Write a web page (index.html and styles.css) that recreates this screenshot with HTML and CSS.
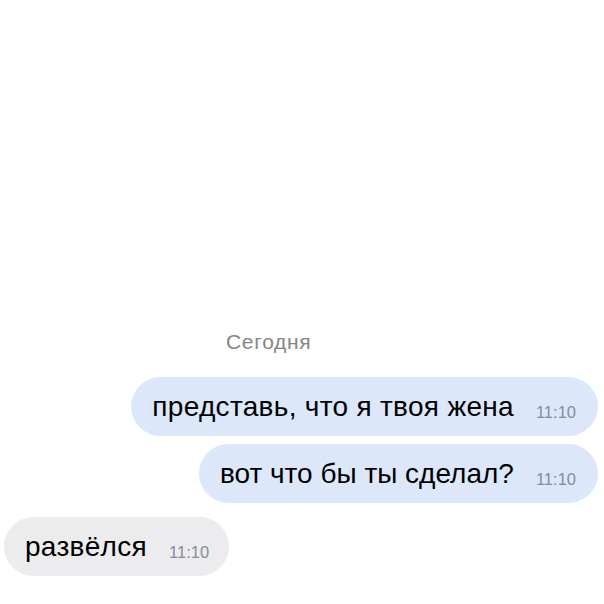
FILE: index.html
```html
<!DOCTYPE html>
<html lang="ru">
<head>
  <meta charset="UTF-8" />
  <title>Сообщения</title>
  <link rel="stylesheet" href="styles.css">
</head>
<body>
  <div class="chat">
    <div class="day">Сегодня</div>

    <div class="msg out">
      <span class="text">представь, что я твоя жена</span>
      <span class="time">11:10</span>
    </div>
    <div class="msg out">
      <span class="text">вот что бы ты сделал?</span>
      <span class="time">11:10</span>
    </div>

    <div class="msg in">
      <span class="text">развёлся</span>
      <span class="time">11:10</span>
    </div>
  </div>
</body>
</html>
```

FILE: styles.css
```css
* {
  box-sizing: border-box;
  font-family: 'Liberation Sans', Arial, sans-serif;
}

body {
  margin: 0;
  background-color: #fff;
  color: #000;
}

.chat {
  display: flex;
  flex-direction: column;
  padding: 330px 6px 0 0;
}

.day {
  align-self: flex-start;
  margin-left: 226px;
  margin-bottom: 23px;
  font-size: 21px;
  line-height: 24px;
  letter-spacing: 0.7px;
  color: #858585;
}

.msg {
  display: flex;
  align-items: baseline;
  height: 59px;
  padding: 0 22px 0 21px;
  border-radius: 30px;
}

.msg + .msg {
  margin-top: 8px;
}

.msg.out {
  align-self: flex-end;
  background-color: #dce8fa;
}

.msg.in {
  align-self: flex-start;
  margin-top: 14px;
  margin-left: 4px;
  padding-right: 20px;
  background-color: #ececef;
}

.text {
  font-size: 28px;
  line-height: 59px;
  letter-spacing: 0.3px;
}

.msg:nth-child(3) .text {
  letter-spacing: 0;
}

.time {
  margin-left: 22px;
  font-size: 16.5px;
  color: #858d99;
  position: relative;
  top: 2px;
}
```
